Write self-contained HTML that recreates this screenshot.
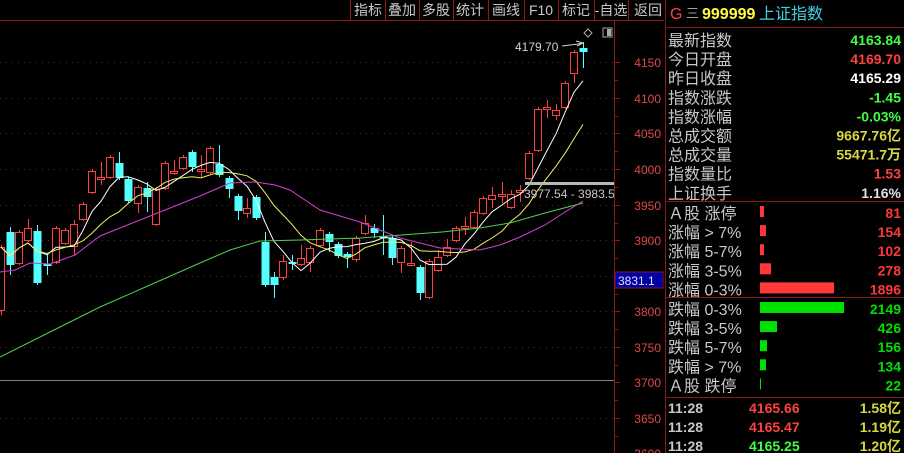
<!DOCTYPE html>
<html><head><meta charset="utf-8"><style>
body{margin:0;background:#000;width:904px;height:453px;overflow:hidden;font-family:"Liberation Sans","Noto Sans CJK SC",sans-serif}
svg{position:absolute;left:0;top:0}
</style></head><body>
<svg id="s" width="904" height="453" xmlns="http://www.w3.org/2000/svg" font-family="Liberation Sans, Noto Sans CJK SC, sans-serif">
<g id="grid"></g>
<g id="cand"></g>
<g id="ma"></g>
<polyline fill="none" stroke="#50d050" stroke-width="1" points="0,357 50,332 100,307 150,285 200,263 230,250 260,241 300,240 360,238 442,232 480,228 510,223 545,213 583,203"/>
<polyline fill="none" stroke="#d040d0" stroke-width="1" points="0,272 15,270 30,263 50,264 75,255 100,236 125,226 150,216 175,206 200,196 230,183 256,182 275,185 290,190 320,210 360,222 400,238 440,248 480,250 500,245 520,237 545,225 565,212 583,201"/>
<rect x="525" y="182" width="89" height="3" fill="#b8b8b8"/>
<text x="524" y="198" font-size="12" fill="#c8c8c8">3977.54 - 3983.5</text>
<text x="515" y="51" font-size="12" fill="#d0d0d0">4179.70</text>
<polyline points="562,46 578,44 583,43" fill="none" stroke="#d0d0d0"/>
<path d="M576,41 L583,43 L577,46" fill="none" stroke="#d0d0d0"/>
<path d="M588,29 L592,33 L588,37 L584,33 Z" fill="none" stroke="#aaa"/>
<rect x="603" y="28" width="9" height="9" fill="none" stroke="#aaa"/><rect x="607" y="29" width="4" height="7" fill="#aaa"/>
<line x1="0" y1="20.5" x2="664" y2="20.5" stroke="#8a1a1a"/>
<g id="tb" font-size="14" fill="#c8c8c8"></g>
<line x1="614.5" y1="20" x2="614.5" y2="453" stroke="#8a1a1a"/>
<line x1="665.5" y1="0" x2="665.5" y2="453" stroke="#8a1a1a"/>
<g id="ax" font-size="12" fill="#e04848" text-anchor="end"></g>
<line x1="0" y1="380.5" x2="614" y2="380.5" stroke="#808080"/>
<rect x="615" y="272" width="48" height="16" fill="#0000a8" stroke="#8a1a1a"/>
<text x="618" y="285" font-size="12" fill="#e0e0e0">3831.1</text>
<text x="670" y="19" font-size="16" fill="#ff4040">G</text>
<text x="686" y="18" font-size="13" fill="#a0a0a0">三</text>
<text x="702" y="19" font-size="16" font-weight="bold" fill="#ffff40">999999</text>
<text x="759" y="19" font-size="16" fill="#40d0e0">上证指数</text>
<line x1="666" y1="27.5" x2="904" y2="27.5" stroke="#8a1a1a"/>
<g id="rp"></g>
<line x1="666" y1="201.5" x2="904" y2="201.5" stroke="#8a1a1a"/>
<line x1="666" y1="297.5" x2="904" y2="297.5" stroke="#8a1a1a"/>
<line x1="666" y1="397.5" x2="904" y2="397.5" stroke="#8a1a1a"/>
</svg>
<script>
var NS="http://www.w3.org/2000/svg";
function el(p,t,a,txt){var e=document.createElementNS(NS,t);for(var k in a)e.setAttribute(k,a[k]);if(txt!=null)e.textContent=txt;document.getElementById(p).appendChild(e);return e;}
var lv=[[4150,62],[4100,98],[4050,133],[4000,169],[3950,205],[3900,240],[3850,276],[3800,311],[3750,347],[3700,382],[3650,418],[3600,453]];
lv.forEach(function(l){
 if(l[0]!=3700) el("grid","line",{x1:0,y1:l[1]+.5,x2:614,y2:l[1]+.5,stroke:"#7a1f1f","stroke-dasharray":"1,5"});
 el("grid","line",{x1:614,y1:l[1]+.5,x2:620,y2:l[1]+.5,stroke:"#8a1a1a"});
 el("grid","line",{x1:614,y1:l[1]+18.5,x2:618,y2:l[1]+18.5,stroke:"#8a1a1a"});
 if(l[0]!=3850) el("ax","text",{x:661,y:l[1]+5},String(l[0]));
});
var tb=[["指标",368],["叠加",402],["多股",436],["统计",470],["画线",506],["F10",541],["标记",576],["-自选",611],["返回",648]];
var seps=[350,385,419,453,488,524,558,594,628];
seps.forEach(function(x){el("grid","line",{x1:x+.5,y1:0,x2:x+.5,y2:20,stroke:"#8a1a1a"});});
tb.forEach(function(t){el("tb","text",{x:t[1],y:15,"text-anchor":"middle"},t[0]);});
var C=[
["r",247,310,245,315],["c",232,265,227,275],["r",232,263,230,265],["r",228,240,219,242],["c",231,283,225,285],["c",264,266,255,275],
["r",228,262,226,264],["r",230,243,228,245],["r",224,246,220,255],["r",204,219,202,221],["r",171,192,169,194],["r",177,179,162,185],
["r",157,177,155,179],["c",163,178,152,180],["c",179,201,177,203],["r",187,203,185,213],["c",188,197,182,212],["r",189,224,187,226],
["r",163,188,161,190],["r",171,173,160,175],["r",157,168,155,170],["c",152,167,150,172],["r",169,171,155,178],["r",148,172,146,174],
["c",164,175,145,177],["c",178,189,176,198],["c",196,211,194,220],["r",208,213,198,218],["c",197,218,195,220],["c",242,285,232,287],
["c",277,285,272,298],["r",261,277,255,280],["c",262,264,255,270],["r",258,264,245,266],["r",248,262,246,272],["r",230,245,228,247],
["c",234,242,232,252],["c",244,256,242,258],["c",254,257,252,268],["r",238,259,236,262],["r",223,233,215,235],["c",228,233,224,238],
["c",236,238,215,255],["c",238,258,236,265],["r",248,262,246,273],["r",263,265,242,265],["c",267,293,265,300],["r",261,297,259,299],
["r",257,270,250,272],["r",247,255,239,257],["r",228,240,226,242],["r",226,228,217,235],["r",212,227,210,229],["r",198,213,196,215],
["r",195,199,187,208],["r",194,196,182,203],["r",194,207,190,209],["r",190,192,185,202],["r",153,178,151,180],["r",109,150,107,152],
["r",107,109,100,118],["r",110,115,104,120],["r",83,107,81,109],["r",52,73,50,83],["c",48,52,42,68]];
var closes=[];
C.forEach(function(c,i){
 var x=Math.round(1+9.1*i), col=c[0]=="r"?"#ff4040":"#54ffff";
 el("cand","line",{x1:x+.5,y1:c[3],x2:x+.5,y2:c[4],stroke:col});
 if(c[0]=="r") el("cand","rect",{x:x-3.5,y:c[1]+.5,width:7,height:Math.max(c[2]-c[1],1),fill:"#000",stroke:col});
 else el("cand","rect",{x:x-3.5,y:c[1],width:8,height:Math.max(c[2]-c[1],1.5),fill:col});
 closes.push(c[0]=="r"?c[1]:c[2]);
});
function ma(n,col){var pts=[];for(var i=0;i<closes.length;i++){var s=0,k=0;for(var j=Math.max(0,i-n+1);j<=i;j++){s+=closes[j];k++;}pts.push(Math.round(1+9.1*i)+","+(s/k).toFixed(1));}
 el("ma","polyline",{points:pts.join(" "),fill:"none",stroke:col,"stroke-width":1});}
ma(5,"#ffffff");ma(10,"#f0f060");
var rows=[["最新指数","4163.84","#40ff40"],["今日开盘","4169.70","#ff4040"],["昨日收盘","4165.29","#ffffff"],["指数涨跌","-1.45","#40ff40"],["指数涨幅","-0.03%","#40ff40"],["总成交额","9667.76亿","#d8d840"],["总成交量","55471.7万","#d8d840"],["指数量比","1.53","#ff4040"],["上证换手","1.16%","#e0e0e0"]];
rows.forEach(function(r,i){var y=46+i*19.1;
 el("rp","text",{x:668,y:y,"font-size":16,fill:"#c8c8c8"},r[0]);
 el("rp","text",{x:901,y:y-1,"font-size":14,"font-weight":"bold",fill:r[2],"text-anchor":"end"},r[1]);});
var b=[["Ａ股 涨停","81",4,"r"],["涨幅 > 7%","154",6,"r"],["涨幅 5-7%","102",4,"r"],["涨幅 3-5%","278",11,"r"],["涨幅 0-3%","1896",74,"r"],
["跌幅 0-3%","2149",84,"g"],["跌幅 3-5%","426",17,"g"],["跌幅 5-7%","156",7,"g"],["跌幅 > 7%","134",6,"g"],["Ａ股 跌停","22",1,"g"]];
b.forEach(function(r,i){var y=(i<5?219+i*19.1:315+(i-5)*19.1);var col=r[3]=="r"?"#ff3838":"#00e000";
 el("rp","text",{x:668,y:y,"font-size":16,fill:"#c8c8c8"},r[0]);
 el("rp","rect",{x:760,y:y-13,width:r[2],height:11,fill:col});
 el("rp","text",{x:901,y:y-1,"font-size":14,"font-weight":"bold",fill:col,"text-anchor":"end"},r[1]);});
var t=[["4165.66","#ff4040","1.58亿"],["4165.47","#ff4040","1.19亿"],["4165.25","#40ff40","1.20亿"]];
t.forEach(function(r,i){var y=413+i*19;
 el("rp","text",{x:668,y:y,"font-size":14,"font-weight":"bold",fill:"#c8c8c8"},"11:28");
 el("rp","text",{x:749,y:y,"font-size":14,"font-weight":"bold",fill:r[1]},r[0]);
 el("rp","text",{x:901,y:y,"font-size":14,"font-weight":"bold",fill:"#d8d840","text-anchor":"end"},r[2]);});
</script>
</body></html>
